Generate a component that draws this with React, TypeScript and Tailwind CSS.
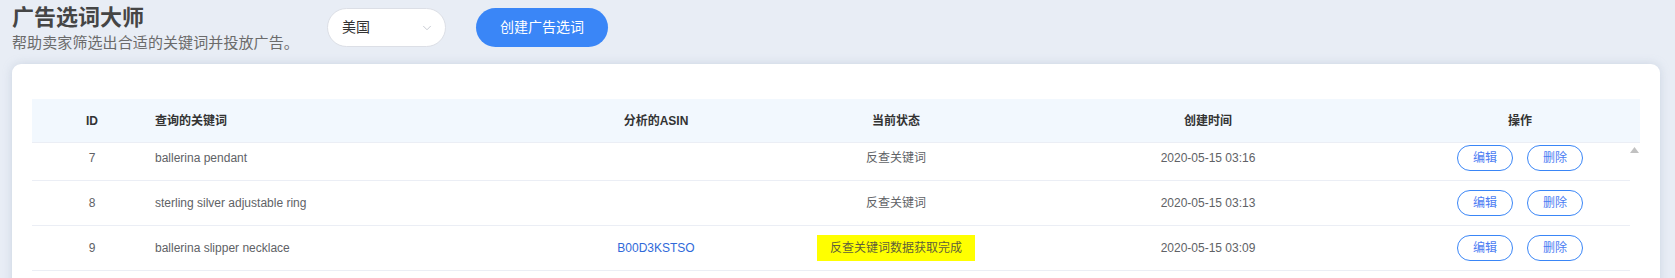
import { ChevronDown } from "lucide-react";

type Row = {
  id: number;
  keyword: string;
  asin: string;
  status: string;
  done: boolean;
  created: string;
};

const rows: Row[] = [
  { id: 7, keyword: "ballerina pendant", asin: "", status: "反查关键词", done: false, created: "2020-05-15 03:16" },
  { id: 8, keyword: "sterling silver adjustable ring", asin: "", status: "反查关键词", done: false, created: "2020-05-15 03:13" },
  { id: 9, keyword: "ballerina slipper necklace", asin: "B00D3KSTSO", status: "反查关键词数据获取完成", done: true, created: "2020-05-15 03:09" },
];

const cols = "grid grid-cols-[120px_384px_240px_240px_384px_240px]";

export default function App() {
  return (
    <div
      className="min-h-screen bg-[#e8edf5] overflow-hidden"
      style={{ fontFamily: '"Liberation Sans", "Noto Sans CJK SC", sans-serif' }}
    >
      {/* top bar */}
      <div className="flex items-start h-[64px] pl-[12px]">
        <div className="pt-[5px] w-[285px]">
          <h1 className="text-[22px] leading-[26px] font-bold text-[#454545]">广告选词大师</h1>
          <p className="text-[15px] leading-[18px] mt-[3px] text-[#6b6b6b] whitespace-nowrap tracking-[0.1px]">
            帮助卖家筛选出合适的关键词并投放广告。
          </p>
        </div>
        <div className="ml-[30px] mt-[8px] w-[119px] h-[39px] rounded-full bg-white border border-[#dcdfe6] flex items-center justify-between pl-[14px] pr-[11px]">
          <span className="text-[14px] text-[#333]">美国</span>
          <ChevronDown size={14} strokeWidth={1.5} className="text-[#c0c4cc]" />
        </div>
        <button className="ml-[30px] mt-[8px] w-[132px] h-[39px] rounded-full bg-[#3a86f7] text-white text-[14px]">
          创建广告选词
        </button>
      </div>

      {/* card */}
      <div className="ml-[12px] mr-[15px] bg-white rounded-[9px] shadow-[0_0_10px_rgba(150,165,190,0.35)] pt-[35px] px-[20px] pb-[20px]">
        <div className={`${cols} h-[44px] items-center bg-[#f2f8fe] border-b border-[#ebeef5] text-[12px] font-semibold text-[#333]`}>
          <div className="text-center">ID</div>
          <div className="pl-[3px]">查询的关键词</div>
          <div className="text-center">分析的ASIN</div>
          <div className="text-center">当前状态</div>
          <div className="text-center">创建时间</div>
          <div className="text-center">操作</div>
        </div>

        <div className="relative h-[135px] overflow-hidden">
          <div className="-mt-[7px] mr-[10px]">
            {rows.map((r) => (
              <div
                key={r.id}
                className="grid grid-cols-[120px_384px_240px_240px_384px_230px] h-[45px] items-center border-b border-[#ebeef5] text-[12px] text-[#606266]"
              >
                <div className="text-center">{r.id}</div>
                <div className="pl-[3px]">{r.keyword}</div>
                <div className="text-center text-[#2f69d9]">{r.asin}</div>
                <div className="flex justify-center">
                  {r.done ? (
                    <span className="bg-[#ffff00] h-[26px] px-[13px] flex items-center text-[#5f5f3a]">{r.status}</span>
                  ) : (
                    <span>{r.status}</span>
                  )}
                </div>
                <div className="text-center">{r.created}</div>
                <div className="flex justify-center gap-[14px] pl-[10px]">
                  <button className="w-[56px] h-[26px] rounded-full border border-[#3a86f7] text-[#4b7cf3] text-[12px]">编辑</button>
                  <button className="w-[56px] h-[26px] rounded-full border border-[#3a86f7] text-[#4b7cf3] text-[12px]">删除</button>
                </div>
              </div>
            ))}
          </div>
          <svg className="absolute right-[1px] top-[4px]" width="9" height="6" viewBox="0 0 9 6">
            <polygon points="4.5,0 9,6 0,6" fill="#c1c1c1" />
          </svg>
        </div>
      </div>
    </div>
  );
}
